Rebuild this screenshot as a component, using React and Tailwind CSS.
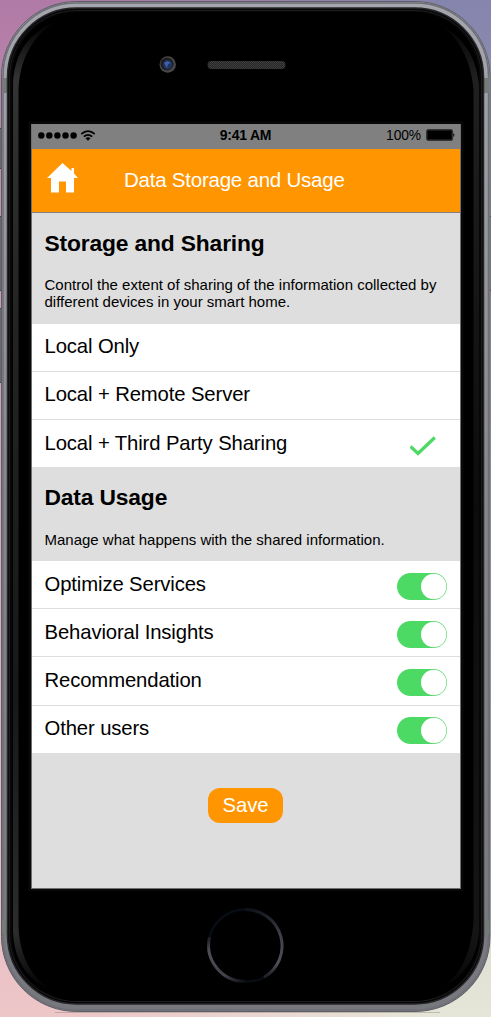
import React from "react";

function PhoneArt() {
  return (
    <svg className="absolute inset-0" width="491" height="1017" viewBox="0 0 491 1017" fill="none" aria-hidden="true">
      <defs>
        <linearGradient id="bgLeft" x1="0" y1="0" x2="0" y2="1">
          <stop offset="0" stopColor="#b07aa7" />
          <stop offset="0.3" stopColor="#cf9bb2" />
          <stop offset="1" stopColor="#edc6c8" />
        </linearGradient>
        <linearGradient id="bgRight" x1="0" y1="0" x2="0" y2="1">
          <stop offset="0" stopColor="#8484ad" />
          <stop offset="0.5" stopColor="#bcb9c2" />
          <stop offset="1" stopColor="#e5e6d7" />
        </linearGradient>
        <linearGradient id="across">
          <stop offset="0.15" stopColor="white" stopOpacity="0" />
          <stop offset="0.9" stopColor="white" />
        </linearGradient>
        <mask id="fade">
          <rect width="491" height="1017" fill="url(#across)" />
        </mask>
        <linearGradient id="metal" x1="0" y1="0" x2="0" y2="1">
          <stop offset="0" stopColor="#a6a6ae" />
          <stop offset="0.5" stopColor="#85868e" />
          <stop offset="1" stopColor="#77777e" />
        </linearGradient>
        <linearGradient id="sheenL" x1="0" y1="20" x2="0" y2="990" gradientUnits="userSpaceOnUse">
          <stop offset="0" stopColor="#333" stopOpacity="0" />
          <stop offset="0.06" stopColor="#333" />
          <stop offset="0.3" stopColor="#242424" />
          <stop offset="0.7" stopColor="#181818" />
          <stop offset="0.94" stopColor="#2c2c2c" />
          <stop offset="1" stopColor="#333" stopOpacity="0" />
        </linearGradient>
        <linearGradient id="sheenR" x1="0" y1="20" x2="0" y2="990" gradientUnits="userSpaceOnUse">
          <stop offset="0" stopColor="#222" stopOpacity="0" />
          <stop offset="0.06" stopColor="#202020" />
          <stop offset="0.5" stopColor="#0c0c0c" />
          <stop offset="0.94" stopColor="#151515" />
          <stop offset="1" stopColor="#222" stopOpacity="0" />
        </linearGradient>
        <linearGradient id="homeA" x1="245" y1="909" x2="266" y2="979" gradientUnits="userSpaceOnUse">
          <stop offset="0" stopColor="#0b1019" />
          <stop offset="0.5" stopColor="#41414a" />
          <stop offset="0.85" stopColor="#4d4d55" />
          <stop offset="1" stopColor="#111319" />
        </linearGradient>
        <linearGradient id="homeB" x1="208" y1="936" x2="245" y2="983" gradientUnits="userSpaceOnUse">
          <stop offset="0" stopColor="#141519" />
          <stop offset="0.2" stopColor="#4d4d55" />
          <stop offset="0.7" stopColor="#42424a" />
          <stop offset="1" stopColor="#080b10" />
        </linearGradient>
        <pattern id="mesh" width="2" height="2" patternUnits="userSpaceOnUse">
          <rect width="2" height="2" fill="#262626" />
          <rect width="1" height="1" fill="#3e3e3e" />
          <rect x="1" y="1" width="1" height="1" fill="#3e3e3e" />
        </pattern>
      </defs>
      <rect width="491" height="1017" fill="url(#bgLeft)" />
      <rect width="491" height="1017" fill="url(#bgRight)" mask="url(#fade)" />

      <path d="M0 128.5h3v40H0zM0 216.5h3v74H0zM0 308.5h3v74H0z" fill="#8b8c92" stroke="#45464c" />
      <path d="M488 216.5h5v74h-5z" fill="#8b8c92" stroke="#45464c" />
      <path d="M55 1012.5H440" stroke="#77706f" strokeOpacity=".35" />

      <rect x="1.5" y="1.5" width="488.500" height="1010" rx="75" fill="url(#metal)" stroke="#5d5e66" />
      <rect x="3" y="3" width="485.500" height="1007" rx="73.500" stroke="#6e6f76" strokeWidth="1.500" />
      <path d="M2 78h6v15H2zM484 78h5v15h-5zM2 919h6v15H2zM484 919h5v15h-5z" fill="#747b78" />
      <rect x="7.500" y="8" width="476" height="996" rx="69" fill="#070707" stroke="#26262a" strokeWidth="1.500" />
      <rect x="9.500" y="10.500" width="472" height="991" rx="67" stroke="#1d1d1d" />
      <rect x="12" y="12" width="467" height="989" rx="65" fill="#000" />
      <path d="M55 22C28 33 14 54 13 85V932C14 961 29 982 51 990C28 975 20 952 18.500 928V89C20 61 31 37 55 22Z" fill="url(#sheenL)" />
      <path d="M436 22C462 35 477 56 479 86V932C477 960 462 979 441 988C464 973 471 949 473.500 922V89C471 59 457 34 436 22Z" fill="url(#sheenR)" />

      <circle cx="167.700" cy="64.500" r="8.200" fill="#49494b" />
      <circle cx="167" cy="64" r="6.500" fill="#1e1e20" />
      <circle cx="167.700" cy="64.700" r="4.500" fill="#20355f" />
      <path d="M164 63l3-2 4 2-3 1-1 4z" fill="#3d5fae" />
      <rect x="207.500" y="61" width="78" height="8" rx="4" fill="url(#mesh)" />

      <rect x="28.500" y="121.500" width="435" height="769.500" fill="#080808" />
      <path d="M209.500 937A36.500 36.500 0 0 1 245 909.500M264 977.500A36.500 36.500 0 0 1 245 981.500" stroke="#080c13" strokeWidth="2.500" />
      <path d="M245 909.500A36.500 36.500 0 0 1 264 977.500" stroke="url(#homeA)" strokeWidth="3" />
      <path d="M209.500 937A36.500 36.500 0 0 0 245 981.500" stroke="url(#homeB)" strokeWidth="3" />
    </svg>
  );
}

function StatusBar() {
  return (
    <div className="grid h-[25px] shrink-0 grid-cols-[1fr_auto_1fr] items-center bg-[#808080] pr-[5px] pb-[2px] pl-[6px] text-black">
      <svg width="59" height="12" viewBox="0 0 59 12" aria-hidden="true">
        <g>
          <circle cx="3.300" cy="5.500" r="3.200" />
          <circle cx="11.300" cy="5.500" r="3.200" />
          <circle cx="19.400" cy="5.500" r="3.200" />
          <circle cx="27.500" cy="5.500" r="3.200" />
          <circle cx="35.600" cy="5.500" r="3.200" />
        </g>
        <g fill="none" stroke="#000" strokeWidth="1.700">
          <path d="M43.300 4Q50-1.800 56.700 4" />
          <path d="M45.800 6.700Q50 3 54.200 6.700" />
        </g>
        <path d="M47.500 8.200Q50 6.100 52.500 8.200L50 10.800Z" />
      </svg>
      <span className="mr-[2px] mb-px text-[14px] leading-none font-bold tracking-[-0.250px]">9:41 AM</span>
      <div className="flex items-center justify-end gap-[5px]">
        <span className="text-[13.800px] leading-none tracking-[-0.100px]">100%</span>
        <svg width="29" height="12" viewBox="0 0 29 12" aria-hidden="true">
          <rect x="0.600" y="0.600" width="26" height="10.800" rx="1.500" fill="#222" stroke="#333" />
          <rect x="1.700" y="1.700" width="23.800" height="8.600" rx="0.500" />
          <path d="M27.300 4Q29.500 6 27.300 8Z" />
        </svg>
      </div>
    </div>
  );
}

function Header() {
  return (
    <header className="flex h-16 shrink-0 border-b border-[#808080] bg-[#ff9500] pl-[15px] text-white">
      <svg className="mt-[14px]" width="32" height="30" viewBox="0 0 32 30" fill="currentColor" aria-hidden="true">
        <path d="M15.500 0L24.500 8V5H27V10.500L31 15H27V29.500H19V18.500H12V29.500H4V15H0Z" />
      </svg>
      <h1 className="ml-[45px] mt-[19px] text-[20.500px] leading-6 font-normal tracking-[-0.230px] whitespace-nowrap">Data Storage and Usage</h1>
    </header>
  );
}

function Row({ label, className, children }) {
  return (
    <div className={"flex shrink-0 items-start justify-between bg-white pr-[13px] pl-[12.500px] " + className}>
      <span className="text-[20.300px] leading-6 tracking-[-0.120px] whitespace-nowrap">{label}</span>
      {children}
    </div>
  );
}

function Toggle() {
  return (
    <span className="mt-px flex h-[27px] w-[50px] shrink-0 justify-end rounded-full bg-[#4cd964]" role="switch" aria-checked="true">
      <svg width="27" height="27" viewBox="0 0 27 27" aria-hidden="true">
        <circle cx="13.700" cy="13.500" r="12.700" fill="#fff" />
      </svg>
    </span>
  );
}

export default function App() {
  return (
    <div className="relative h-[1017px] w-[491px] overflow-hidden font-['Liberation_Sans',Arial,sans-serif] text-black">
      <PhoneArt />
      <div className="relative px-[30px] pt-[123px]">
        <div className="ml-px mt-px flex h-[765px] w-[430px] flex-col border-x border-b border-[#707070] bg-[#dedede]">
          <StatusBar />
          <Header />
          <section className="h-[111px] shrink-0 px-[12.500px] pt-[17px]">
            <h2 className="text-[22.800px] leading-[26px] font-bold tracking-[-0.150px]">Storage and Sharing</h2>
            <p className="mt-5 text-[15px] leading-[17px] whitespace-nowrap">
              Control the extent of sharing of the information collected by
              <br />
              different devices in your smart home.
            </p>
          </section>
          <Row label="Local Only" className="h-12 border-b border-[#dedede] pt-[10px]" />
          <Row label="Local + Remote Server" className="h-12 border-b border-[#dedede] pt-[10px]" />
          <Row label="Local + Third Party Sharing" className="h-[47px] pt-[11px]">
            <svg className="mt-[5px] mr-[11px]" width="26" height="21" viewBox="0 0 26 21" fill="none" stroke="#4cd964" strokeWidth="3.200" aria-hidden="true">
              <path d="M0.500 10.500L8 17.500L24.800 1.500" />
            </svg>
          </Row>
          <section className="h-[94px] shrink-0 px-[12.500px] pt-[17px]">
            <h2 className="text-[22.800px] leading-[26px] font-bold tracking-[-0.150px]">Data Usage</h2>
            <p className="mt-[21px] text-[15px] leading-[17px] whitespace-nowrap">Manage what happens with the shared information.</p>
          </section>
          <Row label="Optimize Services" className="h-12 border-b border-[#dedede] pt-[11px]"><Toggle /></Row>
          <Row label="Behavioral Insights" className="h-12 border-b border-[#dedede] pt-[11px]"><Toggle /></Row>
          <Row label="Recommendation" className="h-[49px] border-b border-[#dedede] pt-[11px]"><Toggle /></Row>
          <Row label="Other users" className="h-[47px] pt-[10px]"><Toggle /></Row>
          <button className="mt-[35px] ml-[176px] h-[35px] w-[75px] shrink-0 rounded-xl bg-[#ff9500] text-[20.300px] leading-[35px] text-white">Save</button>
        </div>
      </div>
    </div>
  );
}
